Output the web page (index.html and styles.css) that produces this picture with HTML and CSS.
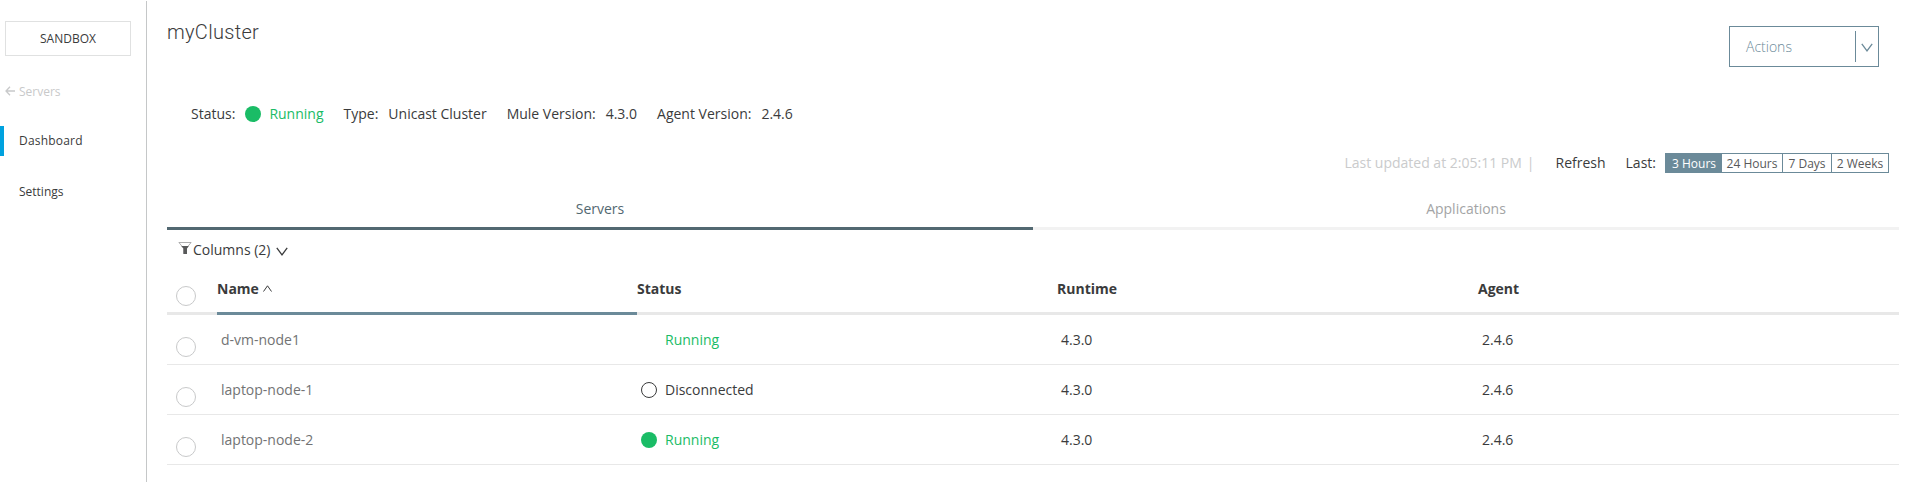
FILE: index.html
```html
<!DOCTYPE html>
<html lang="en">
<head>
<meta charset="utf-8">
<title>myCluster</title>
<link rel="stylesheet" href="styles.css">
</head>
<body>
<div class="app">
  <nav class="sidebar">
    <div class="env">SANDBOX</div>
    <div class="back">
      <svg width="10" height="10" viewBox="0 0 10 10"><path d="M10 5H1M5 .8L1 5l4 4.200"/></svg>
      <span>Servers</span>
    </div>
    <div class="nav-item active">Dashboard</div>
    <div class="nav-item">Settings</div>
  </nav>
  <main class="main">
    <header class="top">
      <h1>myCluster</h1>
      <div class="actions">
        <span class="actions-label">Actions</span>
        <span class="actions-caret"><svg width="12" height="9" viewBox="0 0 12 9"><path d="M.8 .8L6 7.800 11.200 .8"/></svg></span>
      </div>
    </header>
    <div class="info">
      <span class="key">Status:</span><i class="dot on"></i><span class="val green">Running</span>
      <span class="key">Type:</span><span class="val">Unicast Cluster</span>
      <span class="key">Mule Version:</span><span class="val">4.3.0</span>
      <span class="key">Agent Version:</span><span class="val">2.4.6</span>
    </div>
    <div class="toolbar">
      <span class="updated">Last updated at 2:05:11 PM</span>
      <span class="bar">|</span>
      <span class="refresh">Refresh</span>
      <span class="last">Last:</span>
      <div class="ranges">
        <span class="range sel">3 Hours</span><span class="range r24">24 Hours</span><span class="range r7">7 Days</span><span class="range r2">2 Weeks</span>
      </div>
    </div>
    <div class="tabs">
      <div class="tab current">Servers</div>
      <div class="tab">Applications</div>
    </div>
    <div class="columns">
      <svg class="funnel" width="14" height="14" viewBox="0 0 14 14"><path class="rim" d="M.9 1.500h12.200L8.500 7v5.500h-3V7z"/><path class="fill" d="M3.200 5h7.600L9 7.500v5.500H5.500V7.500z"/></svg>
      <span>Columns (2)</span>
      <svg class="chev" width="12" height="9" viewBox="0 0 12 9"><path d="M.8 .8L6 7.800 11.200 .8"/></svg>
    </div>
    <div class="grid head">
      <div class="pick"><i class="radio"></i></div>
      <div class="cell sorted">Name<svg width="9" height="7" viewBox="0 0 9 7"><path d="M.5 6.500L4.500.8l4 5.700"/></svg></div>
      <div class="cell">Status</div><div class="cell">Runtime</div><div class="cell">Agent</div>
    </div>
    <div class="grid row">
      <div class="pick"><i class="radio"></i></div>
      <div class="cell name">d-vm-node1</div>
      <div class="cell green"><i class="dot none"></i>Running</div>
      <div class="cell">4.3.0</div><div class="cell">2.4.6</div>
    </div>
    <div class="grid row">
      <div class="pick"><i class="radio"></i></div>
      <div class="cell name">laptop-node-1</div>
      <div class="cell"><i class="dot off"></i>Disconnected</div>
      <div class="cell">4.3.0</div><div class="cell">2.4.6</div>
    </div>
    <div class="grid row">
      <div class="pick"><i class="radio"></i></div>
      <div class="cell name">laptop-node-2</div>
      <div class="cell green"><i class="dot on"></i>Running</div>
      <div class="cell">4.3.0</div><div class="cell">2.4.6</div>
    </div>
  </main>
</div>
</body>
</html>
```
FILE: styles.css
```css
* { box-sizing: border-box; }
body {
  margin: 0;
  background: #fff;
  color: #3a3b3c;
  font: 14px/20px "Open Sans", sans-serif;
  overflow: hidden;
}
svg { fill: none; stroke: currentColor; stroke-width: 1.3; flex: none; }
.app { display: flex; height: 482px; padding-top: 1px; }

.sidebar {
  flex: none;
  width: 147px;
  padding-top: 20px;
  border-right: 1px solid #c5c7c8;
  font-size: 12px;
}
.env {
  width: 126px;
  height: 35px;
  margin-left: 5px;
  border: 1px solid #e0e1e1;
  line-height: 34px;
  text-align: center;
}
.back {
  display: flex;
  align-items: center;
  gap: 4px;
  height: 20px;
  margin: 26px 0 24px 5px;
  color: #c8c9ca;
}
.back svg { margin-top: -2px; }
.nav-item {
  height: 30px;
  margin-bottom: 21px;
  padding-left: 19px;
  line-height: 29px;
}
.nav-item.active { padding-left: 15px; border-left: 4px solid #00a2df; font-weight: 500; letter-spacing: .2px; }

.main { flex: none; width: 1732px; margin-left: 20px; }
.top { display: flex; justify-content: space-between; height: 66px; padding-right: 20px; }
h1 {
  margin: 16px 0 0;
  font: 300 20px/30px "Roboto", sans-serif;
  letter-spacing: .3px;
}
.actions {
  display: flex;
  justify-content: space-between;
  align-items: center;
  width: 150px;
  height: 41px;
  margin-top: 25px;
  padding-left: 16px;
  border: 1px solid #6b8a99;
  color: #6b8a99;
}
.actions-label { font-weight: 300; }
.actions-caret {
  display: flex;
  align-items: center;
  justify-content: center;
  width: 23px;
  height: 31px;
  padding-top: 2px;
  border-left: 1px solid #6b8a99;
}

.info { display: flex; align-items: center; height: 20px; margin-top: 37px; padding-left: 24px; }
.key { margin-right: 10px; }
.val { margin-right: 20px; }
.green { color: #1abc66; }
.dot {
  flex: none;
  width: 16px;
  height: 16px;
  margin-right: 8px;
  border-radius: 50%;
}
.dot.on { background: #1abc66; }
.dot.off { border: 1px solid #3a3b3c; }

.toolbar {
  display: flex;
  align-items: center;
  justify-content: flex-end;
  height: 20px;
  margin-top: 29px;
  padding-right: 10px;
}
.updated, .bar { color: #cacbcc; }
.updated { margin-right: 5px; }
.bar { margin-right: 21px; }
.refresh { margin-right: 20px; }
.last { margin-right: 9px; }
.ranges { display: flex; width: 224px; height: 20px; border: 1px solid #6b8a99; font-size: 12px; line-height: 19px; text-align: center; color: #58595a; }
.range.sel { width: 56px; background: #6b8a99; color: #fff; }
.r24 { width: 60px; }
.r7 { width: 49px; border-left: 1px solid #6b8a99; }
.r2 { flex: 1; border-left: 1px solid #6b8a99; }

.tabs { display: flex; height: 43px; margin-top: 14px; }
.tab {
  flex: 1;
  padding-top: 12px;
  border-bottom: 3px solid #f2f2f2;
  text-align: center;
  color: #a3a4a5;
}
.tab.current { border-color: #526871; color: #526871; }

.columns { display: flex; align-items: center; height: 40px; padding-left: 11px; }
.funnel { margin: -4px 1px 0 0; stroke: none; }
.rim { stroke: #9a9b9c; stroke-width: .8; }
.fill { fill: #58595a; stroke: none; }
.chev { margin: 2px 0 0 6px; }

.grid {
  display: grid;
  grid-template-columns: 50px 420px 420px 421px 421px;
  border-bottom: 1px solid #e8e8e8;
}
.pick { padding-left: 9px; }
.radio { display: block; width: 20px; height: 20px; border: 1px solid #c8c9ca; border-radius: 50%; }
.head { height: 45px; border: 0; font-weight: 700; }
.head > * { border-bottom: 3px solid #e8e8e8; }
.head .cell { padding-top: 9px; }
.head .pick { padding-top: 16px; }
.head .sorted { border-color: #6b8a99; }
.sorted svg { margin-left: 4px; stroke-width: 1; vertical-align: 2px; }
.row { height: 50px; }
.row .cell { display: flex; align-items: center; height: 50px; padding-left: 4px; }
.row .pick { padding-top: 22px; }
.name { color: #727374; }
```
